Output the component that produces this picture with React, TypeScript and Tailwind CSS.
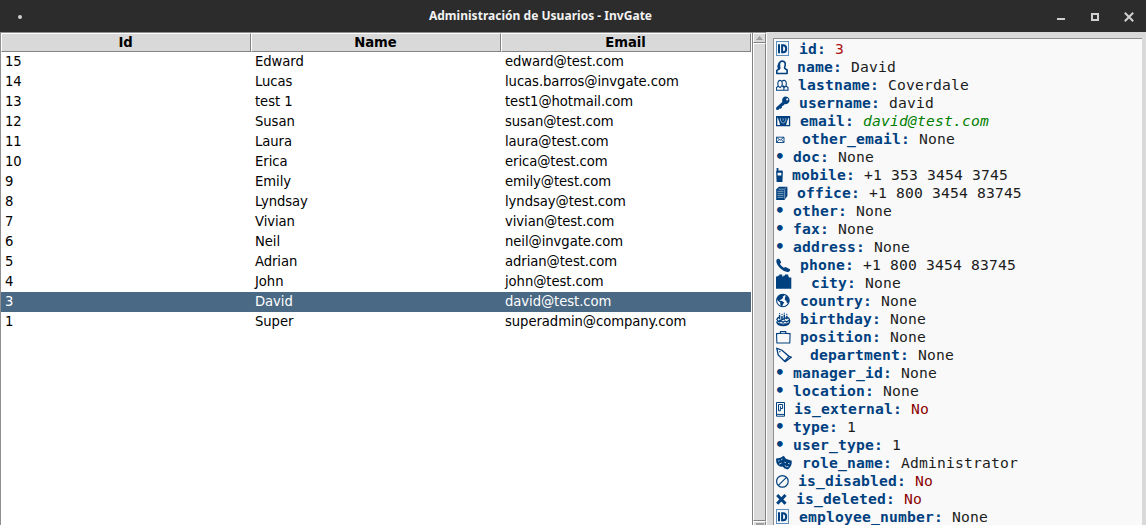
import type { ReactNode } from "react";

const users: [string, string, string][] = [
  ["15", "Edward", "edward@test.com"],
  ["14", "Lucas", "lucas.barros@invgate.com"],
  ["13", "test 1", "test1@hotmail.com"],
  ["12", "Susan", "susan@test.com"],
  ["11", "Laura", "laura@test.com"],
  ["10", "Erica", "erica@test.com"],
  ["9", "Emily", "emily@test.com"],
  ["8", "Lyndsay", "lyndsay@test.com"],
  ["7", "Vivian", "vivian@test.com"],
  ["6", "Neil", "neil@invgate.com"],
  ["5", "Adrian", "adrian@test.com"],
  ["4", "John", "john@test.com"],
  ["3", "David", "david@test.com"],
  ["1", "Super", "superadmin@company.com"],
];

const line = { fill: "none", stroke: "currentColor", strokeWidth: 1.3 };
const solid = { fill: "currentColor" };

const icons: Record<string, ReactNode> = {
  id: (
    <>
      <rect x="0.5" y="1.5" width="12" height="14" fill="#f1f7fc" stroke="#5f90bb" />
      <path d="M3 4.3V13.3M6.1 5.3V12.3H7.2Q10.2 12.3 10.2 8.8Q10.2 5.3 7.2 5.3Z" fill="none" stroke="currentColor" strokeWidth="2" />
    </>
  ),
  user: (
    <path {...line} strokeWidth="1.6" strokeLinejoin="round" d="M.8 15.5V12.4L3.2 11Q4.3 10.2 3.5 8.6Q2.8 3.1 6.2 3.1Q9.9 3.1 9.1 7.8Q8.2 9.4 8.7 10.4L11.1 12V15.5ZM3.2 5Q1.6 7.6 2.6 11" />
  ),
  users: (
    <path {...line} strokeWidth="1.1" d="M.4 14.2V11.6L2.2 10.2Q1 5 3.8 4.4Q6.9 4.2 6 9.6L7.9 11.6V14.2ZM6.2 5.2Q6.9 4.2 8.5 4.4Q11.1 5 10 10L12 11.6V14.2H7.9M2.2 10.2L4.2 11.6L6 9.6M7.3 9.6L8.5 11.2L10 10" />
  ),
  key: (
    <path {...solid} fillRule="evenodd" d="M6.8 4Q8.8 1.8 11.6 3Q14.1 4.8 13.3 7.8Q11.8 10.7 8.9 10L7.4 11.6L5.8 12.2L6.1 13.4L4.6 14.8L3.6 14.4L2.2 16L.1 15.7L.2 13.6L6.3 7.9Q5.7 5.4 6.8 4ZM10.4 4.7A.9 .9 0 1 0 12 6A.9 .9 0 1 0 10.4 4.7Z" />
  ),
  email: (
    <>
      <path {...solid} fillRule="evenodd" d="M0 4H14.2V14.2H0ZM1.3 5.8V12.9H12.9V5.8Z" />
      <path {...solid} d="M1 4H13.2L11.3 8.8L10 13.2H4.2L2.9 8.8Z" />
      <path d="M4.4 6.2V8.2Q5 10.6 7.1 11.1Q9.2 10.6 9.8 8.2V6.2M7.1 6.4V8.6" fill="none" stroke="#c9d9e8" strokeWidth=".7" />
    </>
  ),
  envelope: <path {...line} strokeWidth=".9" d="M.5 7.2H8V12.5H.5ZM.5 7.2L4.2 10.2L8 7.2M.5 12.5L3.1 9.6M8 12.5L5.4 9.6" />,
  mobile: <path {...solid} fillRule="evenodd" d="M.6 2H2.4V4.4H5.9Q6.9 4.5 6.9 5.6L6.4 16H.6L.1 5.6Q0 5 .6 4.7ZM1.6 6.8V9.4H5.3V6.8Z" />,
  office: (
    <>
      <path {...solid} d="M3 2.7H11.4V12L8.4 16H.2V5.2Z" />
      <path d="M2.5 5.2H8.3L10.2 3.4M1.5 7.3H7.5M1.5 9.3H7.5M1.5 11.3H7.5M1.5 13.3H7.5M8.7 5.8V14.6" fill="none" stroke="#d5e3ef" strokeWidth=".6" />
    </>
  ),
  phone: <path {...solid} d="M.6 3.8Q1.8 2.2 3.4 2.9L5.2 6.2L4 7.9Q5.2 10.2 7.8 11.7L9.6 10.9L13.9 13.2Q14.8 14.5 12.4 15.9Q8.4 16.4 4.2 12.3Q-.7 7.2 .6 3.8Z" />,
  city: <path {...solid} d="M0 14.7V2.6H1.6V1.8H3.2V.6H6.2V2.4H7.4V1.4H9V.5H12.2V2.6H13V3.4H15.3V14.7Z" />,
  globe: (
    <>
      <circle cx="6.9" cy="8.5" r="6.3" {...line} strokeWidth="1.1" />
      <path {...solid} d="M.8 6.4Q2.6 1.8 7.4 2L8.6 3.4L6.6 4.7L7.2 5.8L5 7.8L3.9 7.7L3.7 8.7L6 8.9L8.2 10.4L7 12.2L6.2 14.8L4.4 13.2L4.2 10.6L1.6 8.6ZM9 5.6L9.8 3.5L12.6 5.7L13.2 9L11.9 11.6L10.7 10.6L10.4 8.8L8.8 8Z" />
    </>
  ),
  cake: (
    <>
      <path {...line} strokeWidth="1.3" d="M.8 10.2Q1.2 7.6 3 7.4M11.2 7.4Q13.4 7.8 13.6 10.2V12Q12.6 15.6 7.1 15.6Q1.6 15.6 .8 12ZM1.2 10.2L3.4 12L5.2 10.9L7.1 12.2L9 10.9L10.8 12L13 10.2M1 13Q3 14.2 7.1 14.2Q11.2 14.2 13.4 13" />
      <path {...line} strokeWidth="1.5" d="M3.6 5V9.3M6 6V9.8M8.3 4.6V9.8M10.8 5.8V9.3" />
      <path {...line} strokeWidth="1" d="M3.6 3V4.2M6 3.8V5M8.3 2.7V3.8M10.8 3.8V5" />
    </>
  ),
  briefcase: <path {...line} strokeWidth="1.1" strokeLinejoin="round" d="M.5 5.6Q7 5 14.1 5.6L13.8 15H.9ZM4.4 5.2V3.5H9.8V5.2" />,
  tag: (
    <>
      <path {...line} strokeWidth="1.3" d="M.8 2.4L6 4.2L13 10.4L8.6 15.2L2.2 9Z" />
      <path {...line} strokeWidth="1.4" d="M13 10.4L15.2 11.2L8.8 15.9M3.2 5.6H4.4" />
    </>
  ),
  door: (
    <>
      <path {...line} strokeWidth="1" d="M.5 2.5H8.5V16.2H.5Z" />
      <path {...line} strokeWidth="1" d="M2.5 4.5H6.6V8.5H4.4V10.8H2.5ZM4.5 6.4V8.4M1 14.4H8" />
    </>
  ),
  masks: (
    <>
      <path {...solid} d="M0 4.4Q4.4 4.6 7.8 1.8L9.9 4.8L15.8 6.8Q16 12.8 11.8 15.4Q8 15 6.6 12.6Q1.8 13 .3 8.2Z" />
      <path d="M2 7.2L3.6 6.6M5 5.8L6.4 5.2M3 10.2L5.6 9M8.4 8.2L10 8.8M12 9.4L13.6 9.8M8.8 11.6Q10.4 13.4 12.4 12.6" fill="none" stroke="#e4ecf3" strokeWidth=".8" />
    </>
  ),
  ban: (
    <>
      <circle cx="6.4" cy="9.4" r="5.8" {...line} strokeWidth="1.2" />
      <path {...line} strokeWidth="1.2" d="M2.4 13.4L10.4 5.4" />
    </>
  ),
  cross: <path d="M1.2 5L9.5 13.7M9.5 5L1.2 13.7" fill="none" stroke="currentColor" strokeWidth="3" />,
};

type Tone = "plain" | "number" | "red" | "mail";
type Field = { icon?: string; gutter: string; label: string; value: string; tone?: Tone };

const fields: Field[] = [
  { icon: "id", gutter: "w-[23px]", label: "id", value: "3", tone: "number" },
  { icon: "user", gutter: "w-[21px]", label: "name", value: "David" },
  { icon: "users", gutter: "w-[22px]", label: "lastname", value: "Coverdale" },
  { icon: "key", gutter: "w-[23px]", label: "username", value: "david" },
  { icon: "email", gutter: "w-[24px]", label: "email", value: "david@test.com", tone: "mail" },
  { icon: "envelope", gutter: "w-[26px]", label: "other_email", value: "None" },
  { gutter: "w-[17px]", label: "doc", value: "None" },
  { icon: "mobile", gutter: "w-[16px]", label: "mobile", value: "+1 353 3454 3745" },
  { icon: "office", gutter: "w-[21px]", label: "office", value: "+1 800 3454 83745" },
  { gutter: "w-[17px]", label: "other", value: "None" },
  { gutter: "w-[17px]", label: "fax", value: "None" },
  { gutter: "w-[17px]", label: "address", value: "None" },
  { icon: "phone", gutter: "w-[24px]", label: "phone", value: "+1 800 3454 83745" },
  { icon: "city", gutter: "w-[35px]", label: "city", value: "None" },
  { icon: "globe", gutter: "w-[24px]", label: "country", value: "None" },
  { icon: "cake", gutter: "w-[24px]", label: "birthday", value: "None" },
  { icon: "briefcase", gutter: "w-[24px]", label: "position", value: "None" },
  { icon: "tag", gutter: "w-[34px]", label: "department", value: "None" },
  { gutter: "w-[17px]", label: "manager_id", value: "None" },
  { gutter: "w-[17px]", label: "location", value: "None" },
  { icon: "door", gutter: "w-[18px]", label: "is_external", value: "No", tone: "red" },
  { gutter: "w-[17px]", label: "type", value: "1" },
  { gutter: "w-[17px]", label: "user_type", value: "1" },
  { icon: "masks", gutter: "w-[26px]", label: "role_name", value: "Administrator" },
  { icon: "ban", gutter: "w-[22px]", label: "is_disabled", value: "No", tone: "red" },
  { icon: "cross", gutter: "w-[20px]", label: "is_deleted", value: "No", tone: "red" },
  { icon: "id", gutter: "w-[23px]", label: "employee_number", value: "None" },
];

const tones: Record<Tone, string> = {
  plain: "text-[#1c1c1c]",
  number: "text-[#b01010]",
  red: "text-[#8b0000]",
  mail: "text-[#007f00] italic",
};

function TitleBar() {
  return (
    <header className="grid h-8 shrink-0 grid-cols-[1fr_auto_1fr] items-center bg-[#2c2c2c] text-[#d0d0d0]">
      <div className="flex pl-[18px] pt-[2px]">
        <span className="size-1 rounded-full bg-[#d0d0d0]" />
      </div>
      <h1 className="pr-[65px] font-['Noto_Sans',sans-serif] text-[12px] leading-8 font-bold tracking-[0.02px] whitespace-pre text-[#f2f2f2]">
        Administración de Usuarios - InvGate
      </h1>
      <div className="flex items-center justify-end gap-[25px] pr-[12px] pt-[2px]">
        <span className="mt-[3px] mr-px h-[2px] w-2 bg-current" />
        <span className="size-2 border-2 border-current" />
        <svg className="size-[10px]" viewBox="0 0 10 10">
          <path d="M.8 .8L9.2 9.2M9.2 .8L.8 9.2" stroke="currentColor" strokeWidth="2" />
        </svg>
      </div>
    </header>
  );
}

function UserTable() {
  return (
    <section className="flex w-[752px] shrink-0 flex-col border-t border-l border-[#8f8f8f] bg-white font-['DejaVu_Sans_Condensed','DejaVu_Sans',sans-serif] text-[14.67px] tracking-[-0.06px] text-black [font-stretch:condensed]">
      <div className="grid h-[19px] w-[750px] grid-cols-3 font-bold">
        {["Id", "Name", "Email"].map((title) => (
          <div key={title} className="border-t border-r border-b border-l border-t-white border-r-[#828282] border-b-[#828282] border-l-white bg-[#d9d9d9] pr-px text-center leading-4">
            {title}
          </div>
        ))}
      </div>
      {users.map(([id, name, email]) => (
        <div
          key={id}
          className={
            id === "3"
              ? "grid h-5 w-[750px] grid-cols-3 bg-[#4a6984] leading-[18px] text-white"
              : "grid h-5 w-[750px] grid-cols-3 leading-[18px]"
          }
        >
          <span className="pl-1">{id}</span>
          <span className="pl-1">{name}</span>
          <span className="pl-1">{email}</span>
        </div>
      ))}
    </section>
  );
}

function ScrollBar() {
  return (
    <div className="flex w-[15px] shrink-0 flex-col border border-t-[#8f8f8f] border-r-white border-b-0 border-l-[#828282] bg-[#c3c3c3]">
      <div className="flex h-[10px] items-center justify-center border border-t-white border-r-[#828282] border-b-[#828282] border-l-white bg-[#d9d9d9]">
        <svg className="h-1 w-[7px]" viewBox="0 0 7 4">
          <path d="M3.5 0L7 4H0Z" fill="#a0a0a0" />
        </svg>
      </div>
      <div className="h-[478px] border border-t-white border-r-[#828282] border-b-[#828282] border-l-white bg-[#d9d9d9]" />
      <div className="flex flex-1 justify-center border border-b-0 border-t-white border-r-[#828282] border-l-white bg-[#d9d9d9]">
        <span className="mt-px h-[2px] w-[8px] bg-[#a0a0a0]" />
      </div>
    </div>
  );
}

function Details() {
  return (
    <section className="flex min-w-0 flex-1 bg-[#d9d9d9] pt-[6px] pr-1 pl-[6px]">
      <div className="flex-1 border-t border-l border-[#8f8f8f] bg-[#f9f9f9] pt-px pl-px font-['DejaVu_Sans_Mono',monospace] text-[14.67px] tracking-[0.17px]">
        {fields.map(({ icon, gutter, label, value, tone = "plain" }) => (
          <div key={label} className="flex h-[18px] leading-[18px] whitespace-pre">
            <span className={`${gutter} mr-px shrink-0 font-bold text-[#00407f]`}>
              {icon ? (
                <svg className="ml-[0.6px] h-[18px] w-4" viewBox="0 0 16 18">
                  {icons[icon]}
                </svg>
              ) : (
                <span className="text-[16px] leading-[18px]">•</span>
              )}
            </span>
            <span className="font-bold text-[#00407f]">{label}: </span>
            <span className={tones[tone]}>{value}</span>
          </div>
        ))}
      </div>
    </section>
  );
}

export default function App() {
  return (
    <div className="flex h-[525px] w-[1146px] flex-col overflow-hidden bg-[#d9d9d9]">
      <TitleBar />
      <main className="flex min-h-0 flex-1">
        <UserTable />
        <ScrollBar />
        <Details />
      </main>
    </div>
  );
}
